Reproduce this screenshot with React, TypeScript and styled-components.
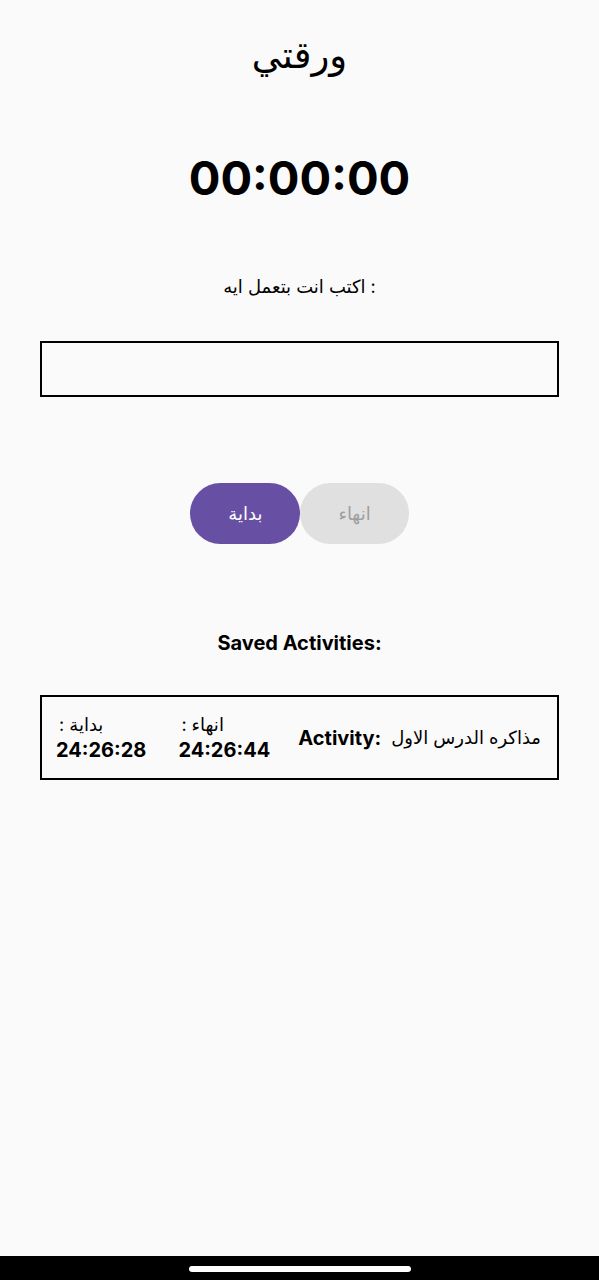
import React from 'react';
import styled, { createGlobalStyle } from 'styled-components';

const GlobalStyle = createGlobalStyle`
    html, body {
        margin: 0;
        padding: 0;
        background: #FAFAFA;
    }
    body {
        font-family: Inter, "DejaVu Sans", sans-serif;
        color: #000;
    }
`

const activities = [
    { name: 'مذاكره الدرس الاول', start: '24:26:28', end: '24:26:44' },
]

const App = () => {
    return (
        <>
            <GlobalStyle />
            <Screen>
                <Main>
                    <Title>ورقتي</Title>
                    <Timer>00:00:00</Timer>
                    <Label>: اكتب انت بتعمل ايه</Label>
                    <Input type="text" />
                    <Buttons>
                        <Button variant="primary">بداية</Button>
                        <Button variant="disabled">انهاء</Button>
                    </Buttons>
                    <Heading>Saved Activities:</Heading>
                    {activities.map((item, index) => (
                        <Card key={index}>
                            <TimeCol>
                                <TimeLabel>بداية :</TimeLabel>
                                <TimeValue>{item.start}</TimeValue>
                            </TimeCol>
                            <TimeCol>
                                <TimeLabel>انهاء :</TimeLabel>
                                <TimeValue>{item.end}</TimeValue>
                            </TimeCol>
                            <ActivityName>
                                <strong>Activity:</strong>
                                <span>{item.name}</span>
                            </ActivityName>
                        </Card>
                    ))}
                </Main>
                <NavBar>
                    <NavHandle />
                </NavBar>
            </Screen>
        </>
    );
};

const Screen = styled.div`
    display: flex;
    flex-direction: column;
    min-height: 1280px;
    background: #FAFAFA;
`

const Main = styled.div`
    flex: 1;
    display: flex;
    flex-direction: column;
    align-items: center;
    padding: 33px 40px 0;
`

const Title = styled.h1`
    margin: 0;
    font-size: 37px;
    font-weight: 400;
    line-height: 44px;
`

const Timer = styled.div`
    margin-top: 72px;
    font-size: 47px;
    font-weight: 700;
    line-height: 58px;
`

const Label = styled.div`
    margin-top: 67px;
    font-size: 18px;
    line-height: 26px;
    direction: rtl;
`

const Input = styled.input`
    box-sizing: border-box;
    margin-top: 41px;
    width: 100%;
    height: 56px;
    border: 2px solid #000;
    border-radius: 0;
    background: transparent;
    outline: none;
    font-size: 18px;
`

const Buttons = styled.div`
    display: flex;
    margin-top: 86px;
`

const Button = styled.button<{ variant: 'primary' | 'disabled' }>`
    height: 61px;
    padding: 0 38px;
    border: none;
    border-radius: 31px;
    font-family: inherit;
    font-size: 18px;
    background: ${p => (p.variant === 'primary' ? '#6750A4' : '#E0E0E0')};
    color: ${p => (p.variant === 'primary' ? '#FFFFFF' : '#9E9E9E')};
`

const Heading = styled.div`
    margin-top: 86px;
    font-size: 20px;
    font-weight: 700;
    line-height: 26px;
`

const Card = styled.div`
    box-sizing: border-box;
    margin-top: 39px;
    width: 100%;
    height: 85px;
    display: flex;
    align-items: center;
    padding: 0 16px 0 14px;
    border: 2px solid #000;
`

const TimeCol = styled.div`
    display: flex;
    flex-direction: column;
    align-items: flex-start;
    flex: none;
    margin-right: 32px;
`

const TimeLabel = styled.div`
    direction: rtl;
    font-size: 18px;
    line-height: 24px;
    padding-left: 3px;
`

const TimeValue = styled.div`
    font-size: 20px;
    font-weight: 700;
    line-height: 26px;
`

const ActivityName = styled.div`
    flex: 1;
    min-width: 0;
    display: flex;
    justify-content: flex-end;
    align-items: center;
    gap: 10px;
    font-size: 18px;
    white-space: nowrap;

    strong {
        font-size: 20px;
        font-weight: 700;
    }
`

const NavBar = styled.div`
    height: 24px;
    background: #000;
    display: flex;
    justify-content: center;
    align-items: center;
`

const NavHandle = styled.div`
    width: 222px;
    height: 6px;
    margin-top: 2px;
    border-radius: 3px;
    background: #FFF;
`

export default App;
